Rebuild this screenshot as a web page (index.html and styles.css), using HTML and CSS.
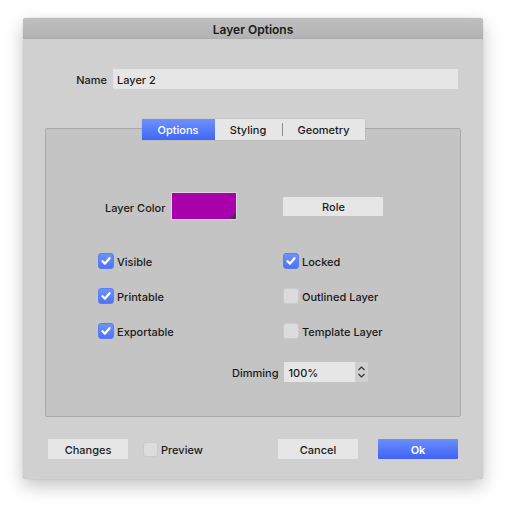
FILE: index.html
```html
<!DOCTYPE html>
<html>
<head>
<meta charset="utf-8">
<link rel="stylesheet" href="styles.css">
</head>
<body>
<div class="dialog">
  <div class="titlebar">Layer Options</div>
  <div class="name-row">
    <label class="name-label">Name</label>
    <div class="field name-field">Layer 2</div>
  </div>
  <div class="group">
    <div class="tabs">
      <div class="tab active t-options">Options</div>
      <div class="tab t-styling">Styling</div>
      <div class="tab-sep"></div>
      <div class="tab t-geometry">Geometry</div>
    </div>
    <div class="color-row">
      <span class="lbl">Layer Color</span>
      <div class="swatch"><span class="corner"></span></div>
      <div class="btn role">Role</div>
    </div>
    <div class="checks">
      <div class="check"><span class="box on"><svg viewBox="0 0 16 16"><path d="M4 8.3 L6.8 11 L12 4.8" /></svg></span>Visible</div>
      <div class="check"><span class="box on"><svg viewBox="0 0 16 16"><path d="M4 8.3 L6.8 11 L12 4.8" /></svg></span>Locked</div>
      <div class="check"><span class="box on"><svg viewBox="0 0 16 16"><path d="M4 8.3 L6.8 11 L12 4.8" /></svg></span>Printable</div>
      <div class="check"><span class="box"></span>Outlined Layer</div>
      <div class="check"><span class="box on"><svg viewBox="0 0 16 16"><path d="M4 8.3 L6.8 11 L12 4.8" /></svg></span>Exportable</div>
      <div class="check"><span class="box"></span>Template Layer</div>
    </div>
    <div class="dim-row">
      <span class="lbl">Dimming</span>
      <div class="field dim-field">100%</div>
      <div class="stepper"><svg viewBox="0 0 13 20"><path d="M3.5 8 L6.5 5 L9.5 8 M3.5 12 L6.5 15 L9.5 12" /></svg></div>
    </div>
  </div>
  <div class="footer">
    <div class="btn changes">Changes</div>
    <div class="check preview"><span class="box"></span>Preview</div>
    <div class="spacer"></div>
    <div class="btn cancel">Cancel</div>
    <div class="btn ok">Ok</div>
  </div>
</div>
</body>
</html>
```
FILE: styles.css
```css
* { box-sizing: border-box; }
html, body { margin: 0; padding: 0; background: #ffffff; }
body {
  font-family: "Inter", "Liberation Sans", sans-serif;
  font-size: 11px;
  font-weight: 500;
  color: #1a1a1a;
  padding-bottom: 27px;
}
.dialog {
  margin: 18px 0 0 23px;
  width: 460px;
  height: 461px;
  background: #d0d0d0;
  border-radius: 3px;
  box-shadow: 0 0 1px rgba(0,0,0,0.35), 0 7px 18px rgba(0,0,0,0.24);
  display: flex;
  flex-direction: column;
  overflow: hidden;
}
.titlebar {
  height: 21px;
  padding-top: 2px;
  background: linear-gradient(#bfbfbf, #b3b3b3);
  border-bottom: 1px solid #ababab;
  display: flex;
  align-items: center;
  justify-content: center;
  font-weight: 600;
  font-size: 12px;
}
.name-row {
  margin-top: 30px;
  display: flex;
  align-items: center;
  gap: 6px;
}
.name-label { width: 84px; text-align: right; padding-top: 2px; }
.field {
  height: 20px;
  background: #e6e6e6;
  display: flex;
  align-items: center;
  padding-left: 4px;
  padding-top: 1px;
}
.name-field { width: 345px; }
.group {
  margin: 39px 22px 0 22px;
  height: 289px;
  background: #c4c4c4;
  border: 1px solid #a9a9a9;
  border-radius: 2px;
  display: flex;
  flex-direction: column;
}
.tabs {
  margin-top: -10px;
  align-self: center;
  display: flex;
  align-items: center;
  height: 21px;
  background: #e6e6e6;
  box-shadow: 0 0 1px rgba(0,0,0,0.2);
}
.tab {
  height: 21px;
  padding-top: 1px;
  display: flex;
  align-items: center;
  justify-content: center;
}
.tab.active {
  background: linear-gradient(#6e92fa, #3f67f5);
  color: #ffffff;
}
.t-options { width: 73px; }
.t-styling { width: 67px; }
.t-geometry { width: 82px; }
.tab-sep { width: 1px; height: 13px; background: #8e8e8e; }
.color-row {
  margin-top: 52px;
  display: flex;
  align-items: center;
  padding-left: 59px;
}
.color-row .lbl { padding-top: 4px; }
.lbl { white-space: nowrap; }
.swatch {
  margin-left: 6px;
  width: 66px;
  height: 28px;
  background: #a800aa;
  border: 1px solid #d8d8d8;
  position: relative;
}
.corner {
  position: absolute;
  right: 0;
  bottom: 0;
  width: 0;
  height: 0;
  border-left: 6px solid transparent;
  border-bottom: 6px solid #3a3a3a;
}
.btn {
  height: 20px;
  padding-top: 1px;
  background: #e6e6e6;
  display: flex;
  align-items: center;
  justify-content: center;
  border-radius: 1px;
}
.role { margin-left: 46px; width: 100px; height: 19px; }
.checks {
  margin-top: 33px;
  padding-left: 52px;
  display: grid;
  grid-template-columns: 185px auto;
  row-gap: 19px;
}
.check {
  display: flex;
  align-items: center;
  height: 16px;
  gap: 3px;
  padding-top: 1px;
}
.box {
  width: 16px;
  height: 16px;
  border-radius: 3px;
  background: #dcdcdc;
  border: 1px solid #cacaca;
  display: flex;
  align-items: center;
  justify-content: center;
  margin-top: -1px;
}
.box.on {
  background: linear-gradient(#6f93fa, #4d72f6);
  border-color: #5a7ef6;
}
.box svg { width: 14px; height: 14px; }
.box path { fill: none; stroke: #ffffff; stroke-width: 2.6; stroke-linecap: round; stroke-linejoin: round; }
.dim-row {
  margin-top: 23px;
  padding-left: 186px;
  display: flex;
  align-items: center;
}
.dim-row .lbl { padding-top: 2px; }
.dim-field { margin-left: 6px; width: 71px; }
.stepper {
  width: 13px;
  height: 20px;
  background: #cfcfcf;
}
.stepper svg { width: 13px; height: 20px; display: block; }
.stepper path { fill: none; stroke: #333; stroke-width: 1.2; }
.footer {
  margin-top: 22px;
  padding: 0 25px;
  display: flex;
  align-items: center;
}
.changes { width: 80px; }
.preview { margin-left: 15px; }
.preview .box { width: 15px; height: 15px; }
.spacer { flex: 1; }
.cancel { width: 80px; }
.ok {
  margin-left: 20px;
  width: 80px;
  background: linear-gradient(#6a8ffa, #3f62f6);
  color: #ffffff;
  font-weight: 600;
}
```
